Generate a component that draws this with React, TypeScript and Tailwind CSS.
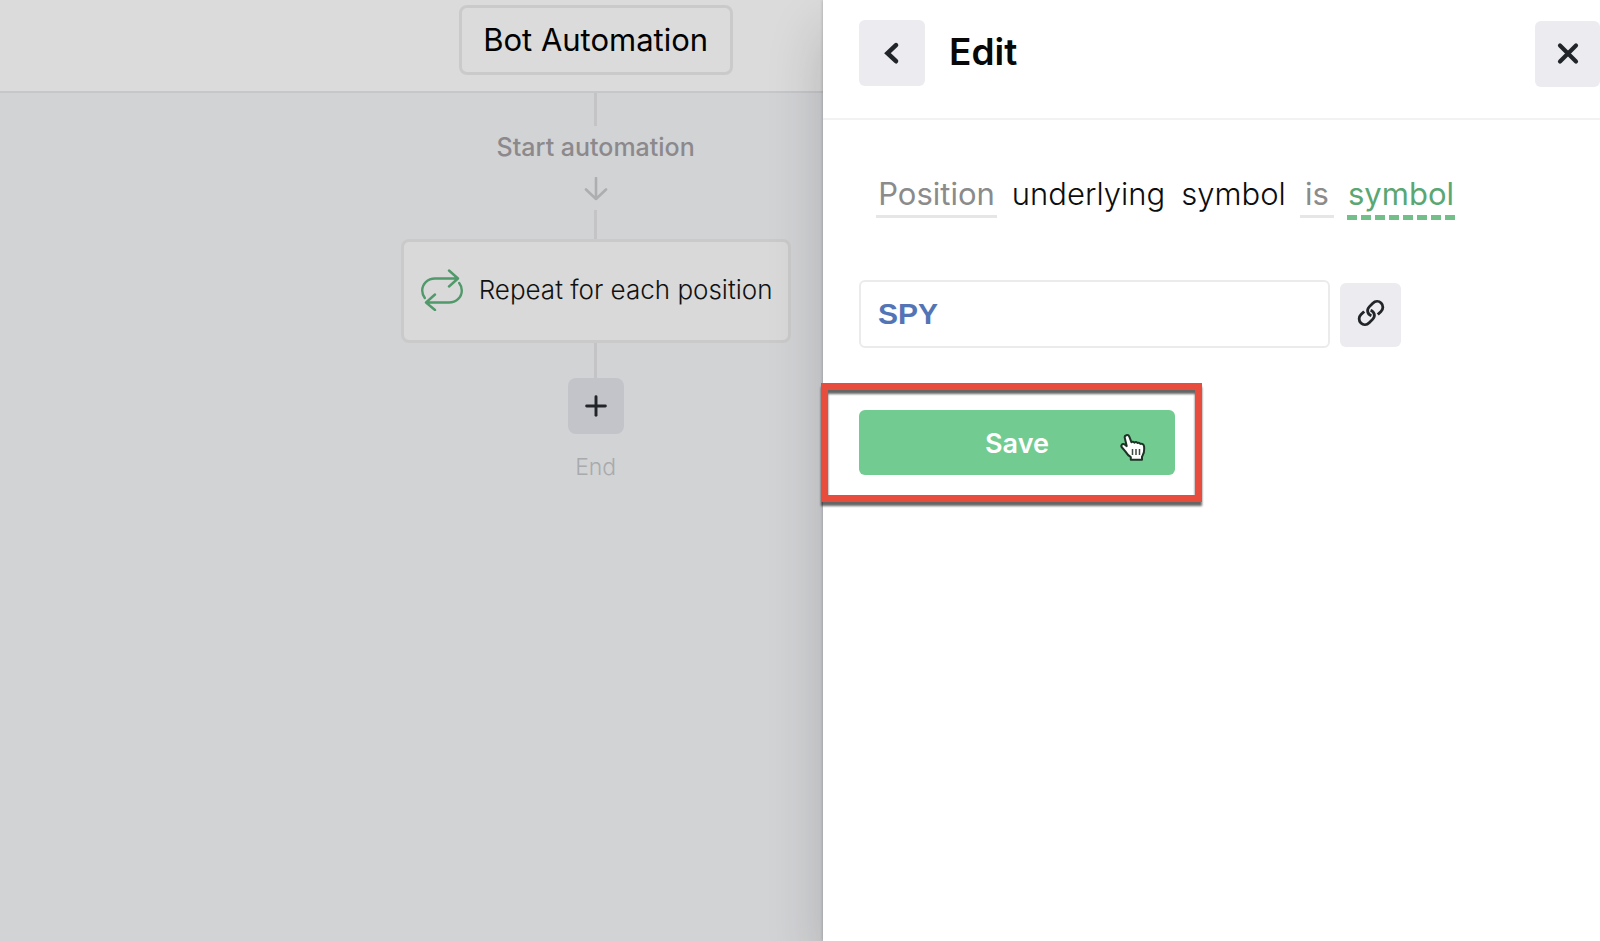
import { Plus } from "lucide-react";

function Connector({ className }: { className: string }) {
  return <div className={`w-[3px] shrink-0 bg-[#c4c4c6] ${className}`} />;
}

function ArrowDown() {
  return (
    <svg className="h-6 w-6" viewBox="0 0 24 24" fill="none" stroke="#adaeb0" strokeWidth="2.6" strokeLinecap="round" strokeLinejoin="round" aria-hidden="true">
      <path d="M12 1v21M2 12.5 12 22l10-9.5" />
    </svg>
  );
}

function RepeatIcon() {
  return (
    <svg className="h-[42px] w-[42px] shrink-0" viewBox="0 0 42 42" fill="none" stroke="#50996a" strokeWidth="2.4" strokeLinecap="round" strokeLinejoin="round" aria-hidden="true">
      <path d="M28 1.5 37 9.500 28 17.500M36 9.500H14C6.500 9.500 1.200 15 1.200 21.500c0 3 .8 5 2.600 7.500" />
      <path d="M14 25.500 5 33.500 14 41M6 33.500h22c7.500 0 12.800-5.500 12.800-12 0-3-.8-5.200-2.600-7.500" />
    </svg>
  );
}

function ChevronIcon() {
  return (
    <svg className="h-6 w-6" viewBox="0 0 24 24" fill="none" stroke="#212429" strokeWidth="4.600" strokeLinecap="round" aria-hidden="true">
      <path d="M16 4.200 7.500 12.200 16 20.200" />
    </svg>
  );
}

function CloseIcon() {
  return (
    <svg className="h-6 w-6" viewBox="0 0 24 24" fill="none" stroke="#212429" strokeWidth="4.200" strokeLinecap="round" aria-hidden="true">
      <path d="m4 3.500 16 16M20 3.500l-16 16" />
    </svg>
  );
}

function LinkIcon() {
  return (
    <svg className="h-7 w-7" viewBox="0 0 28 28" fill="none" stroke="#212429" strokeWidth="2.800" strokeLinecap="butt" strokeLinejoin="round" aria-hidden="true">
      <path d="M14.400 16.800c-4-1.500-5-6-2.200-8.900l3.600-3.600c2.400-2.400 6-2.500 8.300-.3 2.400 2.300 2.300 6-.1 8.400L20.800 15.600" />
      <path d="M13.600 11.200c4 1.500 5 6 2.200 8.900l-3.600 3.600c-2.400 2.400-6 2.500-8.300.3-2.400-2.300-2.300-6 .1-8.400L7.200 12.400" />
    </svg>
  );
}

function HandPointer() {
  return (
    <svg className="pointer-events-none absolute top-6 right-[29px] h-[28px] w-[26px]" viewBox="0 0 26 28" aria-hidden="true">
      <path
        d="M6.300 1.300c1.300-.5 2.500.1 3.100 1.600l2 5.300c.9-.7 2.300-.6 3 .4.900-.7 2.300-.6 3.100.4 1-.5 2.300-.1 2.900.9 2-.6 3.500.6 3.700 2.700.3 3.300.2 6-1.300 8.500l-.8 1.600v3H10.800v-2.500c-2.500-1.500-4.200-3.800-5.700-6.100L1.600 13c-.8-1.400.2-3 1.800-2.900 1.300.1 2.200 1 3.300 2L4.800 4c-.4-1.300.3-2.300 1.500-2.700Z"
        fill="#fff"
        stroke="#1d3325"
        strokeWidth="2"
        strokeLinejoin="round"
      />
      <path d="M12.500 15v6M16 15v6M19.500 15v6" stroke="#3c4a40" strokeWidth="1.500" />
    </svg>
  );
}

function Canvas() {
  return (
    <section className="flex min-w-0 flex-col bg-[#d2d3d5]" aria-label="Automation canvas">
      <header className="flex h-[93px] items-start justify-center border-b-2 border-[#c6c7ca] bg-[#dbdbdb] pt-[5px] pr-0.5 pl-[45%]">
        <button type="button" className="h-[70px] w-[274px] shrink-0 rounded-lg border-[3px] border-[#cacaca] text-[31px] leading-9 whitespace-nowrap text-black">
          Bot Automation
        </button>
      </header>
      <div className="flex flex-col items-center pr-0.5 pl-[45%]">
        <Connector className="h-[33px]" />
        <p className="mt-[3px] text-[25px] leading-9 font-medium whitespace-nowrap text-[#8c898c]">Start automation</p>
        <div className="mt-3 mb-[9px]">
          <ArrowDown />
        </div>
        <Connector className="h-[29px]" />
        <button type="button" className="flex h-[104px] w-[390px] shrink-0 items-center gap-4 rounded-lg border-[3px] border-[#cacaca] bg-[#d9d9d9] pb-0.5 pl-[17px] text-[26px] leading-9 font-light whitespace-nowrap text-[#111]">
          <RepeatIcon />
          Repeat for each position
        </button>
        <Connector className="h-[35px]" />
        <button type="button" aria-label="Add step" className="flex h-14 w-14 items-center justify-center rounded-lg bg-[#c3c4ca]">
          <Plus className="h-8 w-8 text-[#212429]" strokeWidth={2.2} />
        </button>
        <p className="mt-[15px] text-[23px] leading-9 font-light text-[#a9aaac]">End</p>
      </div>
    </section>
  );
}

function EditPanel() {
  return (
    <aside className="z-10 flex min-w-0 flex-col bg-white shadow-[0_30px_52px_rgba(30,25,35,0.2),0_0_3px_rgba(0,0,0,0.25)]" aria-label="Edit condition">
      <header className="flex h-[120px] items-start border-b-2 border-[#f2f2f3] pt-5 pl-9">
        <button type="button" aria-label="Back" className="flex h-[66px] w-[66px] items-center justify-center rounded-md bg-[#ebebf0]">
          <ChevronIcon />
        </button>
        <h1 className="ml-6 text-[37px] leading-[64px] font-semibold text-[#080808]">Edit</h1>
        <button type="button" aria-label="Close" className="mt-px ml-auto flex h-[66px] w-[65px] items-center justify-center rounded-md bg-[#ebebf0]">
          <CloseIcon />
        </button>
      </header>
      <div className="pl-9">
        <p className="flex items-start gap-[13px] pt-[52px] pl-[17px] text-[31px] leading-[43px] font-light whitespace-nowrap text-[#0d0d0d]">
          <a href="#position" className="w-[121px] border-b-[3px] border-[#e6e6e6] text-center font-normal text-[#8b8b8b]">Position</a>
          <span className="w-[157px] text-center">underlying</span>
          <span className="w-[107px] text-center">symbol</span>
          <a href="#is" className="w-[34px] border-b-[3px] border-[#e6e6e6] text-center font-normal text-[#8b8b8b]">is</a>
          <a href="#symbol" className="w-[108px] bg-[repeating-linear-gradient(90deg,#72bf8a_0_10px,transparent_10px_14px)] bg-[length:100%_5px] bg-bottom bg-no-repeat pb-[5px] text-center font-normal text-[#5aa773]">symbol</a>
        </p>
        <form className="mt-[60px]" onSubmit={(event) => event.preventDefault()}>
          <div className="flex items-end gap-[10px]">
            <input
              aria-label="Symbol"
              defaultValue="SPY"
              className="h-[68px] w-[471px] rounded-md border-2 border-[#ebebeb] px-[17px] font-['Liberation_Sans',Arial,sans-serif] text-[30px] font-bold text-[#5475b5] outline-none"
            />
            <button type="button" aria-label="Link value" className="mb-px flex h-16 w-[61px] items-center justify-center rounded-md bg-[#ebebf0] pb-1">
              <LinkIcon />
            </button>
          </div>
          <div className="relative mt-[62px] w-[316px]">
            <button type="submit" className="h-[65px] w-full rounded-md bg-[#72cc91] pt-0.5 text-[27px] leading-9 font-semibold text-white">
              Save
            </button>
            <HandPointer />
            <div className="pointer-events-none absolute -top-[27px] -right-[27px] -bottom-[27px] -left-[38px] border-[7px] border-[#e84c3d] drop-shadow-[0_4px_1px_rgba(0,0,0,0.6)]" />
          </div>
        </form>
      </div>
    </aside>
  );
}

export default function App() {
  return (
    <main className="grid min-h-screen grid-cols-[823fr_777fr] overflow-hidden font-['Inter',sans-serif]">
      <Canvas />
      <EditPanel />
    </main>
  );
}
